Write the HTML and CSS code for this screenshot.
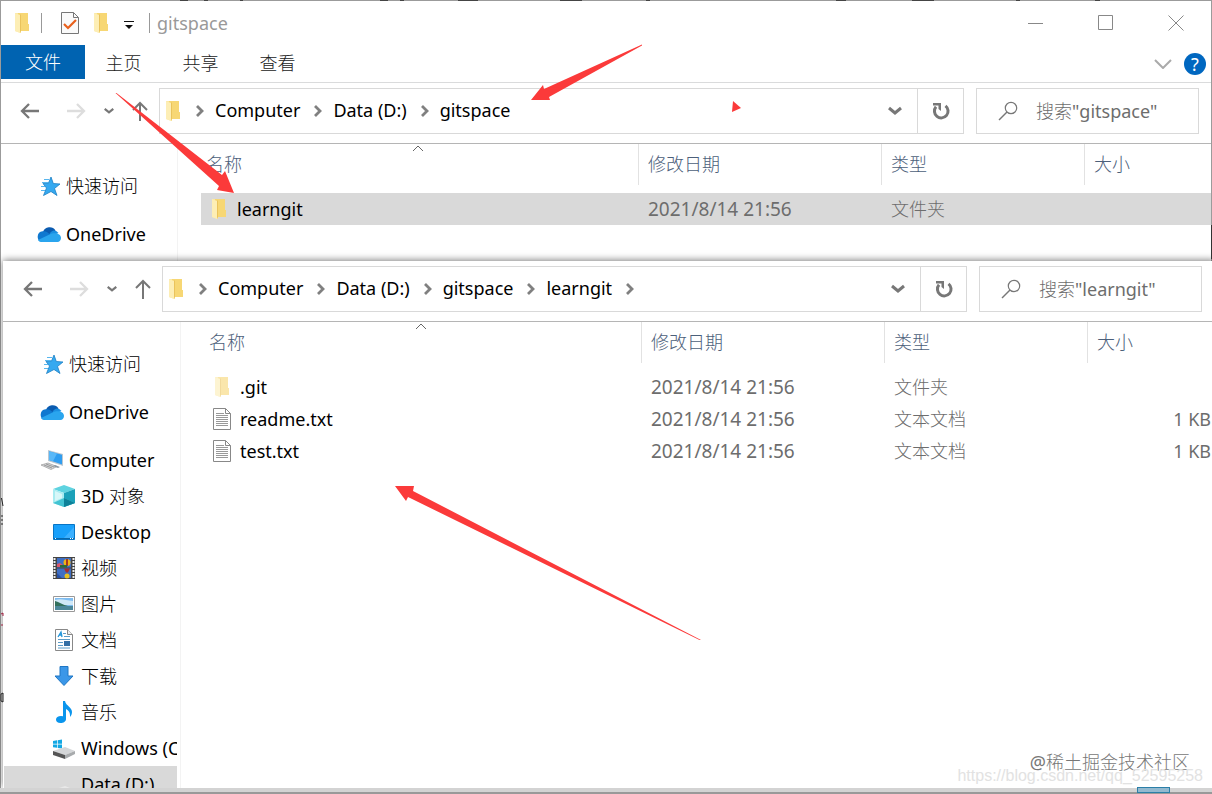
FILE: index.html
```html
<!DOCTYPE html>
<html lang="zh-CN">
<head>
  <meta charset="UTF-8" />
  <meta name="viewport" content="width=device-width, initial-scale=1.0" />
  <title>gitspace</title>
  <link rel="stylesheet" href="styles.css">
</head>
<body>
  <!-- shared icons -->
  <svg class="sprite" aria-hidden="true">
    <symbol id="i-folder" viewBox="0 0 16 22">
      <path d="M1 1h6v20l-6-2z" fill="#fbe7a2"/>
      <path d="M4 1h10v11h1v7H4z" fill="#f7d774"/>
      <path d="M1 1l5 2v18l-5-2z" fill="#fdeeb5"/>
      <path d="M6 3v18l1-2V2z" fill="#eac35c"/>
    </symbol>
    <symbol id="i-back" viewBox="0 0 20 20">
      <path d="M19 10H2M9 3l-7 7 7 7" fill="none" stroke="currentColor" stroke-width="2.300"/>
    </symbol>
    <symbol id="i-forward" viewBox="0 0 20 20">
      <path d="M1 10h17M11 3l7 7-7 7" fill="none" stroke="currentColor" stroke-width="2.300"/>
    </symbol>
    <symbol id="i-up" viewBox="0 0 20 20">
      <path d="M10 20V2M3 9l7-7 7 7" fill="none" stroke="currentColor" stroke-width="2"/>
    </symbol>
    <symbol id="i-down" viewBox="0 0 14 10">
      <path d="M1 2l6 5 6-5" fill="none" stroke="currentColor" stroke-width="3"/>
    </symbol>
    <symbol id="i-right" viewBox="0 0 8 12">
      <path d="M1 1l5 5-5 5" fill="none" stroke="#808080" stroke-width="2.800"/>
    </symbol>
    <symbol id="i-refresh" viewBox="0 0 20 20">
      <path d="M14.500 4.800a6.800 6.800 0 1 1-9.500 1" fill="none" stroke="#777" stroke-width="3"/>
      <path d="M2 2h8v8L7.500 8V4.500H2z" fill="#777"/>
    </symbol>
    <symbol id="i-search" viewBox="0 0 20 20">
      <circle cx="13" cy="7" r="5.7" fill="none" stroke="#777" stroke-width="1.2"/>
      <path d="M9 11l-8 8" stroke="#777" stroke-width="1.4"/>
    </symbol>
    <symbol id="i-star" viewBox="0 0 24 20">
      <path d="M14 1l2.300 6.500L23 8l-5.500 4.500 2.500 7-6-4-7.500 4 3-7.500L6 7.500l5.500-.5z" fill="#35a9f0" stroke="#1c7fc4" stroke-width=".8"/>
      <path d="M7 3.500h5M5 6.500h6M4 10.500h4M4 14.500h4" stroke="#58b6ee" stroke-width="1"/>
    </symbol>
    <symbol id="i-cloud" viewBox="0 0 24 20">
      <path d="M6 8a7 7 0 0 1 12.500-1.500L15 14H3z" fill="#0a5bb0"/>
      <path d="M4.500 18a5.500 5.500 0 0 1 1-10.700c3-.6 5 .7 7 2.700l6 6z" fill="#0f78d0"/>
      <path d="M17 6.500A5.400 5.400 0 0 1 21.500 9l-7 3-2-2c1-2 3-3.500 4.500-3.500z" fill="#1a8ee0"/>
      <path d="M5 18c-2 0-3.500-1-4-2l11.500-5.500C17 8 24 9 24 14c0 2.300-1.500 4-3.500 4z" fill="#2aa5ee"/>
    </symbol>
    <symbol id="i-computer" viewBox="0 0 24 22">
      <path d="M8 1l15 4v12L8 12z" fill="#bcc7d0"/>
      <path d="M9 2.300l13 3.500v9.700L9 11z" fill="#2f9df0"/>
      <path d="M9 2.300l8 2.200-4 7.800L9 11z" fill="#59b8f8"/>
      <path d="M1 16l7-2 9 3.500-6 3z" fill="#d8dadc" stroke="#999" stroke-width=".7"/>
      <path d="M4 16l8 3M6 15l8 3" stroke="#888" stroke-width=".8"/>
      <path d="M15 16l5 2-2 1-5-2z" fill="#8b98a3"/>
    </symbol>
    <symbol id="i-cube" viewBox="0 0 24 24">
      <path d="M1 5l11-4 11 4-11 4z" fill="#5ed3e0"/>
      <path d="M1 5l11 4v14L1 19z" fill="#a8ecf1"/>
      <path d="M12 9l11-4v14l-11 4z" fill="#1ba1b9"/>
      <path d="M1 19l11-5 11 5-11 4z" fill="#43c3d2"/>
      <path d="M12 14l11 5-11 4z" fill="#0e8199"/>
      <path d="M3 7l7 3v4l-7 3z" fill="#d7f7f8"/>
    </symbol>
    <symbol id="i-desktop" viewBox="0 0 24 24">
      <path d="M1.500 4.500h21v15h-21z" fill="#18a0fb" stroke="#0875c5"/>
      <path d="M11 19L22 7v12z" fill="#3cb0ff"/>
      <path d="M2 18h20v1H2z" fill="#0869ad"/>
      <path d="M3 18h1v1H3zM18 18h1v1h-1zM20 18h1v1h-1z" fill="#fff"/>
    </symbol>
    <symbol id="i-video" viewBox="0 0 24 24">
      <path d="M1 1h22v22H1z" fill="#444"/>
      <path d="M5 2h14v9.500H5zM5 12.500h14V22H5z" fill="#3f6fc4"/>
      <path d="M2.500 2v20M21.500 2v20" stroke="#eee" stroke-width="2" stroke-dasharray="2 1"/>
      <circle cx="15" cy="6.500" r="3.500" fill="#f0b414"/>
      <path d="M14 3h2v7h-2z" fill="#a83822"/>
      <path d="M5 8l3-1 3 2v2H5z" fill="#d9566c"/>
      <path d="M8 9h7v2.500H8z" fill="#2d6b35"/>
      <path d="M12 12.500h6l-2 4h-2z" fill="#a33030"/>
      <circle cx="15" cy="20" r="2.500" fill="#e6c020"/>
      <path d="M5 17l5 5H5z" fill="#2750a5"/>
    </symbol>
    <symbol id="i-picture" viewBox="0 0 24 24">
      <path d="M1.500 4.500h21v15h-21z" fill="#fff" stroke="#999"/>
      <path d="M3 6h18v12H3z" fill="#7ebcf0"/>
      <path d="M3 8c5-2 11 0 18 1v4H3z" fill="#cfe8f7"/>
      <path d="M3 9c4 1 8 4 13 5H3z" fill="#33705c"/>
      <path d="M3 14h18v4H3z" fill="#4c8799"/>
    </symbol>
    <symbol id="i-doc" viewBox="0 0 24 24">
      <path d="M3.500 1.500h12l5 5v16h-17z" fill="#fff" stroke="#888"/>
      <path d="M15.500 1.500v5h5" fill="#eee" stroke="#888"/>
      <path d="M6 9l3-5 1 5M7 7h3" fill="none" stroke="#2196db" stroke-width="1.300"/>
      <path d="M11 5.500h3M12 8.500h6M6 11.500h12M6 14.500h5M6 17.500h5M6 20h12" stroke="#5b9cc8"/>
      <path d="M12 13h6v5h-6z" fill="#346fa5"/>
    </symbol>
    <symbol id="i-download" viewBox="0 0 24 24">
      <path d="M8 2.500h8V12h5l-9 9.500L3 12h5z" fill="#3b97e8" stroke="#1f76c4"/>
    </symbol>
    <symbol id="i-music" viewBox="0 0 24 24">
      <path d="M11 1h2c1 5 7 6 7 11 0 2-1 4-2 5 .5-5-2-7-4-8v10c0 2.500-2.500 4-5.500 4S4 21.500 4 19.500 6 16 9 16l2 .3z" fill="#0a95ed"/>
    </symbol>
    <symbol id="i-drive" viewBox="0 0 24 24">
      <path d="M1 5l4-.7v3.400H1zM5.700 4.200L10 3.500v4.200H5.700zM1 8.400h4v3.400l-4-.6zM5.700 8.400H10v4.100l-4.300-.6z" fill="#12a8e4"/>
      <path d="M1 15l12-4 10 4-10 4z" fill="#d4d6d8"/>
      <path d="M1 15l12 4v4L1 19z" fill="#555"/>
      <path d="M13 19l10-4v3l-10 5z" fill="#a8abad"/>
    </symbol>
    <symbol id="i-disk" viewBox="0 0 24 24">
      <path d="M1 18l12-4 10 4-10 4z" fill="#e8e8e8"/>
    </symbol>
    <symbol id="i-text" viewBox="0 0 18 22">
      <path d="M.5.5h12l5 5v16H.5z" fill="#fff" stroke="#888"/>
      <path d="M12.500.5v5h5" fill="none" stroke="#888"/>
      <path d="M3 5.500h8M3 7.500h12M3 9.500h12M3 11.500h12M3 13.500h12M3 15.500h12M3 17.500h12" stroke="#999"/>
    </symbol>
  </svg>

  <main class="desktop">
    <!-- gitspace window -->
    <section class="window window-back">
      <header class="titlebar">
        <div class="quick">
          <svg class="folder"><use href="#i-folder"/></svg>
          <i class="bar"></i>
          <button class="q-check" aria-label="属性">
            <svg width="18" height="22"><path d="M.5.5h12l5 5v16H.5z" fill="#fafafa" stroke="#777"/><path d="M12.500.5v5h5" fill="none" stroke="#777"/><path d="M3 12l4 4 8-8" fill="none" stroke="#e8601c" stroke-width="2.200"/></svg>
          </button>
          <button class="q-new" aria-label="新建文件夹"><svg class="folder"><use href="#i-folder"/></svg></button>
          <button class="q-more" aria-label="自定义快速访问工具栏">
            <svg width="12" height="10"><path d="M1 1.500h10" stroke="#111"/><path d="M2 5h8L6 9z" fill="#111"/></svg>
          </button>
          <i class="bar"></i>
        </div>
        <h1>gitspace</h1>
        <div class="controls">
          <button aria-label="最小化"><svg width="16" height="16"><path d="M0 8.500h15" stroke="#888"/></svg></button>
          <button aria-label="最大化"><svg width="16" height="16"><path d="M.5.5h14v14H.5z" fill="none" stroke="#888"/></svg></button>
          <button aria-label="关闭"><svg width="16" height="16"><path d="M.5.5l15 15M15.500.5l-15 15" stroke="#888"/></svg></button>
        </div>
      </header>

      <nav class="ribbon">
        <button class="tab file">文件</button>
        <button class="tab">主页</button>
        <button class="tab">共享</button>
        <button class="tab">查看</button>
        <div class="ribbon-end">
          <button aria-label="展开功能区"><svg width="18" height="10"><path d="M1 1l8 8 8-8" fill="none" stroke="#aaa" stroke-width="2"/></svg></button>
          <button class="help" aria-label="帮助">?</button>
        </div>
      </nav>

      <div class="toolbar">
        <div class="nav">
          <button aria-label="后退"><svg><use href="#i-back"/></svg></button>
          <button aria-label="前进" disabled><svg><use href="#i-forward"/></svg></button>
          <button class="recent" aria-label="最近浏览的位置"><svg><use href="#i-down"/></svg></button>
          <button class="up" aria-label="上移"><svg><use href="#i-up"/></svg></button>
        </div>
        <div class="address">
          <svg class="folder"><use href="#i-folder"/></svg>
          <svg class="sep"><use href="#i-right"/></svg>
          <a href="#">Computer</a>
          <svg class="sep"><use href="#i-right"/></svg>
          <a href="#">Data (D:)</a>
          <svg class="sep"><use href="#i-right"/></svg>
          <a href="#">gitspace</a>
          <button class="history" aria-label="以前的位置"><svg><use href="#i-down"/></svg></button>
          <button class="refresh" aria-label="刷新"><svg><use href="#i-refresh"/></svg></button>
        </div>
        <label class="search">
          <svg><use href="#i-search"/></svg>
          <input type="text" placeholder='搜索"gitspace"' aria-label="搜索gitspace">
        </label>
      </div>

      <div class="body">
        <ul class="tree">
          <li class="root"><svg><use href="#i-star"/></svg>快速访问</li>
          <li class="root"><svg><use href="#i-cloud"/></svg>OneDrive</li>
        </ul>
        <div class="files">
          <table>
            <thead>
              <tr>
                <th class="c-name">名称<svg class="sort" width="12" height="7"><path d="M1 6l5-5 5 5" fill="none" stroke="#666"/></svg></th>
                <th class="c-date">修改日期</th>
                <th class="c-type">类型</th>
                <th class="c-size">大小</th>
              </tr>
            </thead>
            <tbody>
              <tr class="selected">
                <td class="name"><span><svg><use href="#i-folder"/></svg>learngit</span></td>
                <td class="date">2021/8/14 21:56</td>
                <td>文件夹</td>
                <td class="size"></td>
              </tr>
            </tbody>
          </table>
        </div>
      </div>
    </section>

    <!-- learngit window -->
    <section class="window window-front">
      <div class="toolbar">
        <div class="nav">
          <button aria-label="后退"><svg><use href="#i-back"/></svg></button>
          <button aria-label="前进" disabled><svg><use href="#i-forward"/></svg></button>
          <button class="recent" aria-label="最近浏览的位置"><svg><use href="#i-down"/></svg></button>
          <button class="up" aria-label="上移"><svg><use href="#i-up"/></svg></button>
        </div>
        <div class="address">
          <svg class="folder"><use href="#i-folder"/></svg>
          <svg class="sep"><use href="#i-right"/></svg>
          <a href="#">Computer</a>
          <svg class="sep"><use href="#i-right"/></svg>
          <a href="#">Data (D:)</a>
          <svg class="sep"><use href="#i-right"/></svg>
          <a href="#">gitspace</a>
          <svg class="sep"><use href="#i-right"/></svg>
          <a href="#">learngit</a>
          <svg class="sep"><use href="#i-right"/></svg>
          <button class="history" aria-label="以前的位置"><svg><use href="#i-down"/></svg></button>
          <button class="refresh" aria-label="刷新"><svg><use href="#i-refresh"/></svg></button>
        </div>
        <label class="search">
          <svg><use href="#i-search"/></svg>
          <input type="text" placeholder='搜索"learngit"' aria-label="搜索learngit">
        </label>
      </div>

      <div class="body">
        <ul class="tree">
          <li class="root"><svg><use href="#i-star"/></svg>快速访问</li>
          <li class="root"><svg><use href="#i-cloud"/></svg>OneDrive</li>
          <li class="root open"><svg><use href="#i-computer"/></svg>Computer</li>
          <li><svg><use href="#i-cube"/></svg>3D 对象</li>
          <li><svg><use href="#i-desktop"/></svg>Desktop</li>
          <li><svg><use href="#i-video"/></svg>视频</li>
          <li><svg><use href="#i-picture"/></svg>图片</li>
          <li><svg><use href="#i-doc"/></svg>文档</li>
          <li><svg><use href="#i-download"/></svg>下载</li>
          <li><svg><use href="#i-music"/></svg>音乐</li>
          <li><svg><use href="#i-drive"/></svg>Windows (C:)</li>
          <li class="selected"><svg><use href="#i-disk"/></svg>Data (D:)</li>
        </ul>
        <div class="files">
          <table>
            <thead>
              <tr>
                <th class="c-name">名称<svg class="sort" width="12" height="7"><path d="M1 6l5-5 5 5" fill="none" stroke="#666"/></svg></th>
                <th class="c-date">修改日期</th>
                <th class="c-type">类型</th>
                <th class="c-size">大小</th>
              </tr>
            </thead>
            <tbody>
              <tr>
                <td class="name hidden-file"><span><svg><use href="#i-folder"/></svg>.git</span></td>
                <td class="date">2021/8/14 21:56</td>
                <td>文件夹</td>
                <td class="size"></td>
              </tr>
              <tr>
                <td class="name"><span><svg><use href="#i-text"/></svg>readme.txt</span></td>
                <td class="date">2021/8/14 21:56</td>
                <td>文本文档</td>
                <td class="size">1 KB</td>
              </tr>
              <tr>
                <td class="name"><span><svg><use href="#i-text"/></svg>test.txt</span></td>
                <td class="date">2021/8/14 21:56</td>
                <td>文本文档</td>
                <td class="size">1 KB</td>
              </tr>
            </tbody>
          </table>
        </div>
      </div>
    </section>

    <div class="taskbar"><i></i></div>

    <svg class="marks" width="1212" height="794" aria-hidden="true">
      <path d="M180 .5h8M204 .5h4M240 .5h3M380 .5h8M400 .5h4M458 .5h20M560 .5h22M646 .5h4M836 .5h10M912 .5h22M1016 .5h4M1095 .5h5" stroke="#444"/>
      <path d="M1.500 498l1.500 8M1 516h2M1 520h2M1 524h2M1 694l2-1v9l-2-1z" stroke="#222" fill="none"/>
      <path d="M1 614l2-1v3M1 625h2" stroke="#a02040" fill="none"/>
      <path d="M1211.500 225v34" stroke="#333"/>
      <g fill="#fb3a3a">
        <path d="M642 44.500v1L549 97l1 3-19 0 12-15 1 4z"/>
        <path d="M115.500 93h1L222 175l3-4 9 22-17-3 2-4z"/>
        <path d="M701 640h-1.500L408 497l-2 4-11-15 19 0-1 5z"/>
        <path d="M733 101l8 7-9 4z"/>
      </g>
    </svg>

    <p class="credit">@稀土掘金技术社区</p>
    <p class="credit-url">https://blog.csdn.net/qq_52595258</p>
  </main>
</body>
</html>
```

FILE: styles.css
```css
* {
  box-sizing: border-box;
}

html, body {
  margin: 0;
  height: 100%;
  overflow: hidden;
}

body {
  font-family: "Noto Sans", "Noto Sans CJK SC Light", "Noto Sans CJK SC", sans-serif;
  font-size: 18px;
  line-height: 24px;
  color: #000;
}

button {
  display: flex;
  align-items: center;
  justify-content: center;
  padding: 0;
  border: none;
  background: none;
  font: inherit;
  color: inherit;
}

svg {
  flex: none;
}

.sprite {
  position: absolute;
  width: 0;
  height: 0;
}

.desktop {
  position: relative;
  height: 100vh;
  min-height: 400px;
  overflow: hidden;
  background-color: #c4c4c4;
}

/* windows */
.window {
  position: absolute;
  display: flex;
  flex-direction: column;
  background-color: #fff;
  overflow: hidden;
}

.window-back {
  inset: 0;
  border: 1px solid #9b9b9b;
}

.window-back .tree,
.window-back .nav {
  margin-left: -1px;
}

.window-front {
  top: 261px;
  left: 3px;
  right: -3px;
  bottom: 6px;
  box-shadow: 0 -1px 7px rgba(0, 0, 0, 0.5);
}

.folder {
  width: 16px;
  height: 22px;
}

/* title bar */
.titlebar {
  display: flex;
  align-items: center;
  height: 44px;
}

.quick {
  display: flex;
  align-items: center;
  padding-left: 13px;
}

.bar {
  width: 1px;
  height: 20px;
  background-color: #999;
}

.quick .bar:first-of-type {
  margin: 0 19px 0 11px;
}

.q-check { margin-right: 14px; }
.q-new { margin-right: 14px; }
.q-more { margin: 4px 14px 0 0; }

.titlebar h1 {
  margin: 0 0 0 7px;
  font-size: 18px;
  font-weight: 400;
  color: #999;
}

.controls {
  display: flex;
  margin-left: auto;
}

.controls button {
  width: 70px;
  height: 44px;
}

/* ribbon tabs */
.ribbon {
  display: flex;
  height: 38px;
  border-bottom: 1px solid #dadbdc;
}

.tab {
  width: 77px;
  height: 36px;
  color: #222;
}

.tab.file {
  width: 84px;
  height: 34px;
  background-color: #0063b1;
  color: #fff;
}

.ribbon-end {
  display: flex;
  align-items: center;
  gap: 12px;
  margin-left: auto;
  padding-right: 5px;
}

.help {
  width: 22px;
  height: 22px;
  border-radius: 50%;
  background-color: #0067c0;
  color: #fff;
}

/* toolbar */
.toolbar {
  display: flex;
  flex: none;
  height: 61px;
  padding: 5px 13px 9px 0;
  border-bottom: 1px solid #b5b5b5;
}

.window-back .toolbar {
  padding-right: 12px;
}

.nav {
  display: flex;
  align-items: center;
  width: 159px;
  padding-left: 20px;
  color: #777;
}

.nav svg {
  width: 20px;
  height: 20px;
}

.nav button:disabled {
  margin-left: 26px;
  color: #ddd;
}

.nav .recent {
  margin: 0 16px 0 18px;
}

.nav .recent svg {
  width: 10px;
  height: 8px;
}

.address {
  display: flex;
  flex: 1;
  align-items: center;
  border: 1px solid #d9d9d9;
  padding-left: 5px;
}

.address a {
  padding-bottom: 2px;
  color: #000;
  text-decoration: none;
}

.sep {
  width: 8px;
  height: 12px;
  margin: 0 11px 0 14px;
}

.folder + .sep {
  margin-left: 15px;
}

.history {
  width: 44px;
  height: 44px;
  margin-left: auto;
  color: #777;
}

.history svg {
  width: 14px;
  height: 10px;
}

.refresh {
  width: 46px;
  height: 44px;
  border-left: 1px solid #d9d9d9;
}

.refresh svg {
  width: 20px;
  height: 20px;
}

.search {
  display: flex;
  align-items: center;
  gap: 18px;
  width: 223px;
  margin-left: 12px;
  padding-left: 21px;
  border: 1px solid #d9d9d9;
}

.search svg {
  width: 20px;
  height: 20px;
}

.search input {
  flex: 1;
  min-width: 0;
  padding: 0;
  border: none;
  outline: none;
  background: none;
  font: inherit;
}

.search input::placeholder {
  color: #6d6d6d;
}

/* navigation tree */
.body {
  display: flex;
  flex: 1;
  min-height: 0;
}

.tree {
  flex: none;
  width: 178px;
  margin: 0;
  padding: 24px 3px 0 1px;
  border-right: 1px solid #f3f3f3;
  list-style: none;
  overflow: hidden;
}

.tree li {
  display: flex;
  align-items: center;
  gap: 5px;
  height: 36px;
  padding-left: 48px;
  overflow: hidden;
  white-space: nowrap;
}

.tree .root {
  margin-bottom: 12px;
  padding-left: 36px;
}

.tree .root.open {
  margin-bottom: 0;
}

.tree .selected {
  background-color: #d9d9d9;
}

.tree svg {
  width: 24px;
  height: 24px;
}

/* file list */
.files {
  flex: 1;
  min-width: 0;
  padding-left: 23px;
}

table {
  width: 100%;
  table-layout: fixed;
  border-spacing: 0;
}

th {
  height: 49px;
  padding: 0 0 10px 10px;
  background: linear-gradient(#e2e2e2, #e2e2e2) no-repeat 0 0 / 1px 41px;
  font-weight: 400;
  text-align: left;
  color: #4c607a;
}

.c-name {
  position: relative;
  padding-left: 5px;
  background: none;
}

.c-date { width: 243px; }
.c-type { width: 203px; }
.c-size { width: 128px; }

.window-back .c-size { width: 127px; }

.sort {
  position: absolute;
  top: 1px;
  left: calc(50% - 8px);
}

td {
  height: 32px;
  padding: 0 0 0 10px;
  color: #6d6d6d;
}

.name {
  padding-left: 9px;
  color: #000;
}

.name span {
  display: flex;
  align-items: center;
  gap: 9px;
}

.name svg {
  width: 18px;
  height: 22px;
}

.hidden-file svg {
  opacity: 0.6;
}

.date {
  font-size: 19px;
}

.size {
  padding-right: 4px;
  text-align: right;
}

tr.selected td {
  background-color: #d9d9d9;
}

/* strip under the front window */
.taskbar {
  position: absolute;
  left: 0;
  right: 0;
  bottom: 0;
  height: 6px;
  border-bottom: 2px solid #999;
  background-color: #d3d3d3;
}

.taskbar i {
  position: absolute;
  right: 42px;
  bottom: -1px;
  width: 33px;
  height: 6px;
  border: 1px solid #2b7fa8;
  background-color: #93b9cf;
}

.marks {
  position: absolute;
  top: 0;
  left: 0;
}

.credit,
.credit-url {
  position: absolute;
  margin: 0;
  white-space: nowrap;
}

.credit {
  right: 22px;
  bottom: 20px;
  color: #777;
}

.credit-url {
  right: 9px;
  bottom: 6px;
  font-family: "Liberation Sans", sans-serif;
  font-size: 16px;
  color: #e2e2e2;
}
```
